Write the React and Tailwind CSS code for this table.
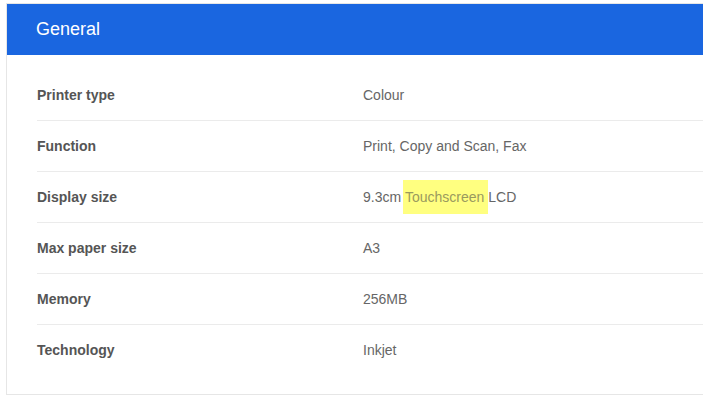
const rows = [
  { label: 'Printer type', value: 'Colour' },
  { label: 'Function', value: 'Print, Copy and Scan, Fax' },
  { label: 'Display size', value: null },
  { label: 'Max paper size', value: 'A3' },
  { label: 'Memory', value: '256MB' },
  { label: 'Technology', value: 'Inkjet' },
]

// display size value with the highlighted word
function DisplayValue() {
  return (
    <>
      {'9.3cm '}
      <span className="bg-[#ffff80] text-[#9a9a5e] py-[9px] ml-[-2px] pl-[2px]">{'Touchscreen '}</span>
      {'LCD'}
    </>
  )
}

export default function App() {
  return (
    <div
      className="w-[703px] h-[396px] overflow-hidden bg-white pt-[3px] pl-[6px]"
      style={{ fontFamily: '"Liberation Sans", Arial, sans-serif' }}
    >
      <div className="w-[720px] border border-[#e6e6e6] bg-white">
        {/* header */}
        <div className="h-[51px] bg-[#1a66e0] flex items-center pl-[29px]">
          <h2 className="text-[18px] text-white">General</h2>
        </div>

        <div className="pl-[30px] pt-[15px] pb-[18px]">
          {rows.map((r, i) => (
            <div
              key={r.label}
              className={`flex items-center h-[51px] text-[14px] ${i < rows.length - 1 ? 'border-b border-[#ebebeb]' : ''}`}
            >
              <div className="w-[326px] font-bold text-[#555555]">{r.label}</div>
              <div className="text-[#666666] whitespace-pre">
                {r.value === null ? <DisplayValue /> : r.value}
              </div>
            </div>
          ))}
        </div>
      </div>
    </div>
  )
}
